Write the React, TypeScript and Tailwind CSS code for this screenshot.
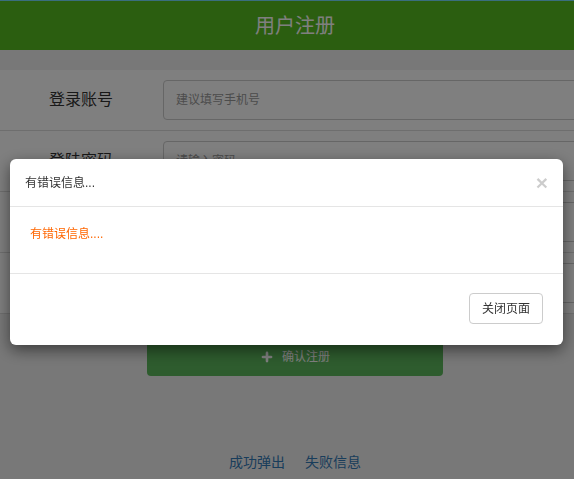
import { Plus } from "lucide-react";

const font = { fontFamily: '"Liberation Sans", "Noto Sans CJK SC", sans-serif' };

const rows = [
  { label: "登录账号", placeholder: "建议填写手机号" },
  { label: "登陆密码", placeholder: "请输入密码" },
  { label: "确认密码", placeholder: "请再次输入密码" },
  { label: "手机号码", placeholder: "请输入手机号码" },
];

function RegisterPage() {
  return (
    <div className="w-[590px] min-h-[479px] bg-[#f0f0f0]">
      <div className="h-[50px] border-t border-[#74dcff] bg-[#56bc20] flex items-center justify-center text-white text-[20px]">
        用户注册
      </div>
      <div className="mt-5 bg-white">
        {rows.map((r) => (
          <div key={r.label} className="h-[61px] border-b border-[#dddddd] flex items-center">
            <div className="w-[163px] pl-[49px] text-[16px] text-[#333]">{r.label}</div>
            <div className="flex-1 mr-[10px] h-10 border border-[#cccccc] rounded flex items-center pl-[12px] text-[12px] text-[#999]">
              {r.placeholder}
            </div>
          </div>
        ))}
      </div>
      <div className="mt-6 mx-auto w-[296px] h-[38px] bg-[#5cb85c] rounded flex items-center justify-center gap-2 text-white text-[12px]">
        <Plus size={14} strokeWidth={4.5} />
        <span>确认注册</span>
      </div>
      <div className="mt-[76px] flex justify-center gap-5 text-[14px] text-[#337ab7]">
        <span>成功弹出</span>
        <span>失败信息</span>
      </div>
    </div>
  );
}

export default function App() {
  return (
    <div className="relative w-full h-[479px] overflow-hidden" style={font}>
      <RegisterPage />
      <div className="fixed inset-0 bg-black/50" />
      <div className="fixed top-[159px] left-[10px] right-[11px] bg-white rounded-md shadow-[0_5px_15px_rgba(0,0,0,0.5)]">
        <div className="h-12 border-b border-[#e5e5e5] flex items-center justify-between pl-[15px] pr-[15px]">
          <span className="text-[12px] text-[#333]">有错误信息...</span>
          <span className="text-[21px] font-bold leading-none text-black/20">×</span>
        </div>
        <div className="h-[67px] border-b border-[#e5e5e5] pl-5 pt-[19px] text-[12px] leading-[17px] text-[#ff6600]">
          有错误信息....
        </div>
        <div className="flex justify-end pt-[19px] pb-[21px] px-5">
          <div className="h-[31px] w-[74px] border border-[#cccccc] rounded flex items-center justify-center text-[12px] text-[#333]">
            关闭页面
          </div>
        </div>
      </div>
    </div>
  );
}
